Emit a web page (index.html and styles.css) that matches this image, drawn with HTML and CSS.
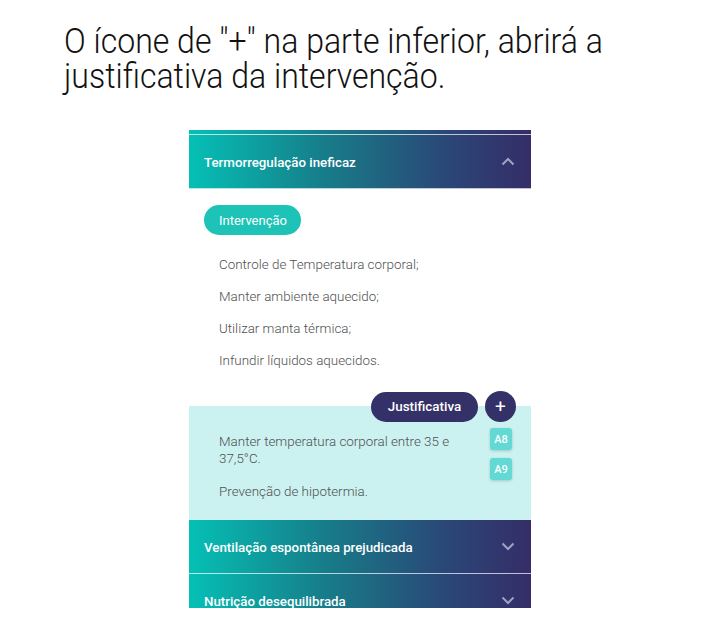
FILE: index.html
```html
<!DOCTYPE html>
<html lang="pt">
<head>
<meta charset="utf-8">
<link rel="stylesheet" href="styles.css">
</head>
<body>
<h1 class="title">O ícone de "+" na parte inferior, abrirá a justificativa da intervenção.</h1>
<div class="panel">
  <div class="strip"></div>
  <div class="acc-head">
    <span class="acc-title">Termorregulação ineficaz</span>
    <svg class="chev" width="14" height="9" viewBox="0 0 14 9"><path d="M1.5 7.5 L7 2 L12.5 7.5" fill="none" stroke="currentColor" stroke-width="2"/></svg>
  </div>
  <div class="acc-body">
    <span class="pill pill-teal">Intervenção</span>
    <ul class="list">
      <li>Controle de Temperatura corporal;</li>
      <li>Manter ambiente aquecido;</li>
      <li>Utilizar manta térmica;</li>
      <li>Infundir líquidos aquecidos.</li>
    </ul>
    <div class="justif-row">
      <span class="pill pill-navy">Justificativa</span>
      <span class="plus">+</span>
    </div>
  </div>
  <div class="justif-body">
    <div class="justif-text">
      <p>Manter temperatura corporal entre 35 e 37,5°C.</p>
      <p>Prevenção de hipotermia.</p>
    </div>
    <div class="badges">
      <span class="badge">A8</span>
      <span class="badge">A9</span>
    </div>
  </div>
  <div class="acc-head">
    <span class="acc-title">Ventilação espontânea prejudicada</span>
    <svg class="chev" width="14" height="9" viewBox="0 0 14 9"><path d="M1.5 1.5 L7 7 L12.5 1.5" fill="none" stroke="currentColor" stroke-width="2"/></svg>
  </div>
  <div class="clip">
    <div class="acc-head">
      <span class="acc-title">Nutrição desequilibrada</span>
      <svg class="chev" width="14" height="9" viewBox="0 0 14 9"><path d="M1.5 1.5 L7 7 L12.5 1.5" fill="none" stroke="currentColor" stroke-width="2"/></svg>
    </div>
  </div>
</div>
</body>
</html>
```
FILE: styles.css
```css
html, body {
  margin: 0;
  padding: 0;
  background: #ffffff;
}
body {
  font-family: Roboto, "Noto Sans", sans-serif;
}
.title {
  margin: 0;
  padding: 24px 0 0 70px;
  width: 640px;
  font-family: Roboto, sans-serif;
  font-weight: 300;
  font-size: 35px;
  line-height: 35px;
  color: #111;
  transform: scaleX(0.915);
  transform-origin: 0 0;
}
.panel {
  width: 342px;
  margin: 36px 0 0 189px;
}
.strip {
  height: 4px;
  background: linear-gradient(90deg, #05c0b5 0%, #177c89 40%, #2a4777 75%, #352d68 100%);
  border-bottom: 1px solid rgba(255,255,255,0.7);
}
.acc-head {
  height: 53px;
  display: flex;
  align-items: center;
  justify-content: space-between;
  padding: 0 16px 0 15px;
  background: linear-gradient(90deg, #05c0b5 0%, #177c89 40%, #2a4777 75%, #352d68 100%);
  border-bottom: 1px solid rgba(255,255,255,0.7);
  box-sizing: content-box;
}
.acc-title {
  color: #fff;
  font-weight: 500;
  font-size: 13.3px;
  padding-top: 1px;
}
.chev {
  color: rgba(205,210,228,0.7);
}
.acc-body {
  padding: 16px 0 0 15px;
  display: flex;
  flex-direction: column;
  align-items: flex-start;
}
.pill {
  display: inline-flex;
  align-items: center;
  height: 30px;
  border-radius: 15px;
  color: #fff;
  font-size: 13px;
  box-sizing: border-box;
}
.pill-teal {
  background: #1dc3b7;
  padding: 0 14px 0 15px;
  font-weight: 400;
}
.list {
  list-style: none;
  margin: 14px 0 0 0;
  padding: 0 0 0 15px;
}
.list li {
  font-weight: 300;
  font-size: 13.4px;
  line-height: 32px;
  color: #505050;
}
.justif-row {
  align-self: stretch;
  display: flex;
  justify-content: flex-end;
  align-items: center;
  gap: 7px;
  padding-right: 15px;
  margin-top: 14px;
  position: relative;
  z-index: 1;
}
.pill-navy {
  background: #343068;
  font-weight: 500;
  font-size: 13.4px;
  width: 107px;
  justify-content: center;
}
.plus {
  width: 31px;
  height: 31px;
  border-radius: 50%;
  background: #343068;
  color: #fff;
  font-size: 19px;
  font-weight: 400;
  display: flex;
  align-items: center;
  justify-content: center;
  line-height: 1;
}
.justif-body {
  background: #cbf2f0;
  margin-top: -16px;
  height: 114px;
  padding: 27px 19px 0 30px;
  box-sizing: border-box;
  display: flex;
  justify-content: space-between;
}
.justif-text {
  width: 245px;
}
.justif-text p {
  margin: 0 0 16px 0;
  font-weight: 300;
  font-size: 13.4px;
  line-height: 17px;
  color: #505050;
}
.badges {
  display: flex;
  flex-direction: column;
  gap: 8px;
  margin-top: -5px;
}
.badge {
  width: 22px;
  height: 22px;
  border-radius: 3px;
  background: #62d9d3;
  color: #fff;
  font-weight: 500;
  font-size: 11px;
  display: flex;
  align-items: center;
  justify-content: center;
  box-shadow: 0 1px 3px rgba(0,0,0,0.18);
}
.clip {
  height: 34px;
  overflow: hidden;
}
```
